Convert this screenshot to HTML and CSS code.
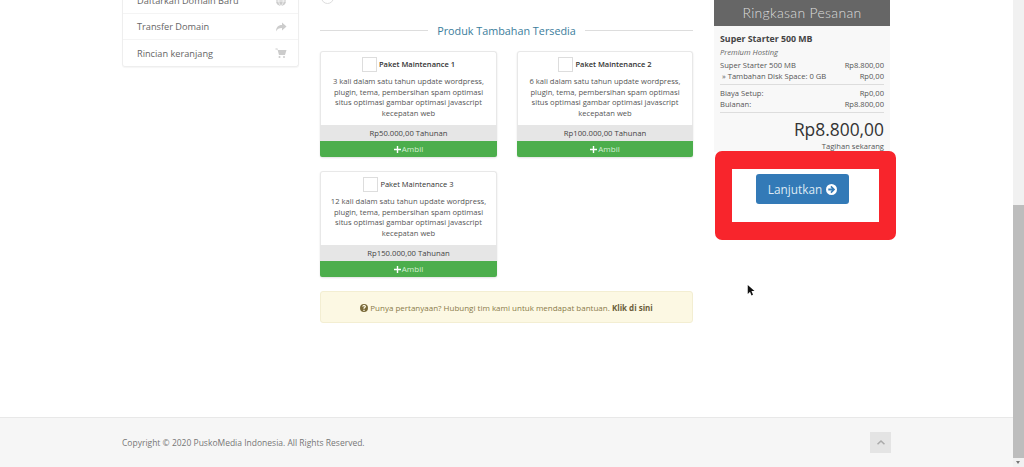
FILE: index.html
```html
<!DOCTYPE html>
<html lang="en">
<head>
  <meta charset="UTF-8" />
  <title>Keranjang</title>
  <link rel="stylesheet" href="styles.css">
</head>
<body>
  <div class="page">
    <main class="main">
      <aside class="sidebar">
        <a class="side-item">Daftarkan Domain Baru
          <svg class="side-icon" viewBox="0 0 24 24"><circle cx="12" cy="12" r="10"/><path class="globe-lines" d="M2 12h20M12 2c-6 6-6 14 0 20M12 2c6 6 6 14 0 20"/></svg>
        </a>
        <a class="side-item">Transfer Domain
          <svg class="side-icon" viewBox="0 0 24 24"><path d="M14 3l9 8-9 8v-5C8 14 4 16 2 21 2 13 6 8 14 8z"/></svg>
        </a>
        <a class="side-item">Rincian keranjang
          <svg class="side-icon" viewBox="0 0 24 24"><path d="M1 3h4l1 3h17l-3 10H8L5 5H1z"/><circle cx="9" cy="20" r="2"/><circle cx="18" cy="20" r="2"/></svg>
        </a>
      </aside>

      <section class="content">
        <div class="radio"></div>
        <h2 class="addons-title"><span>Produk Tambahan Tersedia</span></h2>
        <div class="addons">
          <div class="addon">
            <div class="addon-head"><span class="check"></span><b>Paket Maintenance 1</b></div>
            <p class="addon-desc">3 kali dalam satu tahun update wordpress, plugin, tema, pembersihan spam optimasi situs optimasi gambar optimasi javascript kecepatan web</p>
            <div class="addon-price">Rp50.000,00 Tahunan</div>
            <div class="addon-btn"><svg class="plus" viewBox="0 0 10 10"><path d="M4 0h2v4h4v2H6v4H4V6H0V4h4z"/></svg>Ambil</div>
          </div>
          <div class="addon">
            <div class="addon-head"><span class="check"></span><b>Paket Maintenance 2</b></div>
            <p class="addon-desc">6 kali dalam satu tahun update wordpress, plugin, tema, pembersihan spam optimasi situs optimasi gambar optimasi javascript kecepatan web</p>
            <div class="addon-price">Rp100.000,00 Tahunan</div>
            <div class="addon-btn"><svg class="plus" viewBox="0 0 10 10"><path d="M4 0h2v4h4v2H6v4H4V6H0V4h4z"/></svg>Ambil</div>
          </div>
          <div class="addon">
            <div class="addon-head"><span class="check"></span><b class="plain">Paket Maintenance 3</b></div>
            <p class="addon-desc">12 kali dalam satu tahun update wordpress, plugin, tema, pembersihan spam optimasi situs optimasi gambar optimasi javascript kecepatan web</p>
            <div class="addon-price">Rp150.000,00 Tahunan</div>
            <div class="addon-btn"><svg class="plus" viewBox="0 0 10 10"><path d="M4 0h2v4h4v2H6v4H4V6H0V4h4z"/></svg>Ambil</div>
          </div>
        </div>
        <div class="help">
          <svg class="help-icon" viewBox="0 0 24 24"><path fill-rule="evenodd" d="M12 0a12 12 0 1 1 0 24 12 12 0 0 1 0-24zM10 17v4h4v-4zM12 3c-3 0-5 2-5.500 4.500l3.500 1c.3-1.500 1-2.300 2-2.300s1.800.6 1.800 1.500c0 2-3.800 2.300-3.800 6.300v.5h4c0-3 4-3.500 4-7 0-2.700-2.700-4.500-6-4.500z"/></svg>
          Punya pertanyaan? Hubungi tim kami untuk mendapat bantuan. <b>Klik di sini</b>
        </div>
      </section>

      <aside class="summary">
        <div class="summary-head">Ringkasan Pesanan</div>
        <div class="summary-body">
          <div class="prod-name">Super Starter 500 MB</div>
          <div class="prod-group">Premium Hosting</div>
          <div class="lines">
            <div class="line"><span>Super Starter 500 MB</span><span>Rp8.800,00</span></div>
            <div class="line"><span>&nbsp;» Tambahan Disk Space: 0 GB</span><span>Rp0,00</span></div>
          </div>
          <div class="lines">
            <div class="line"><span>Biaya Setup:</span><span>Rp0,00</span></div>
            <div class="line"><span>Bulanan:</span><span>Rp8.800,00</span></div>
          </div>
          <div class="total">Rp8.800,00</div>
          <div class="total-note">Tagihan sekarang</div>
        </div>
        <div class="highlight">
          <a class="btn-next">Lanjutkan
            <svg class="next-icon" viewBox="0 0 24 24"><path fill-rule="evenodd" d="M12 0a12 12 0 1 1 0 24 12 12 0 0 1 0-24zM12 4l-2.500 2.500 3.500 3.500H5v4h8l-3.500 3.500L12 20l8-8z"/></svg>
          </a>
        </div>
      </aside>

      <svg class="cursor" viewBox="0 0 12 16"><path d="M1 0v12l3-3 2 5 2-1-2-5h4z"/></svg>
    </main>

    <footer class="footer">
      <span>Copyright © 2020 PuskoMedia Indonesia. All Rights Reserved.</span>
      <a class="to-top"><svg viewBox="0 0 10 6"><path d="M5 0l5 4.500-1.300 1.300L5 2.500 1.300 5.800 0 4.500z"/></svg></a>
    </footer>
  </div>

  <div class="scrollbar"><div class="scroll-thumb"></div><div class="scroll-arrow"></div></div>
</body>
</html>
```

FILE: styles.css
```css
* {
  box-sizing: border-box;
}

html, body {
  height: 467px;
  overflow: hidden;
}

body {
  margin: 0;
  display: flex;
  font-family: "Open Sans", sans-serif;
  color: #333;
  background: #fff;
}

.page {
  flex: 1;
  display: flex;
  flex-direction: column;
}

.main {
  position: relative;
  height: 417px;
  padding-left: 122px;
  display: flex;
  align-items: flex-start;
}

/* sidebar, scrolled past its top */
.sidebar {
  width: 177px;
  margin-top: -12px;
  border: 1px solid #eee;
  border-top: none;
  border-radius: 0 0 3px 3px;
  box-shadow: 0 1px 1px rgba(0, 0, 0, 0.04);
}

.side-item {
  height: 26px;
  padding: 0 11px 0 14px;
  display: flex;
  align-items: center;
  justify-content: space-between;
  font-size: 9.2px;
  color: #666;
  border-bottom: 1px solid #f4f4f4;
}

.side-item:last-child {
  border-bottom: none;
}

.side-icon {
  width: 12px;
  height: 12px;
  fill: #ccc;
}

.globe-lines {
  fill: none;
  stroke: #fff;
  stroke-width: 1.500;
}

.content {
  width: 373px;
  margin-left: 21px;
  position: relative;
}

.radio {
  position: absolute;
  left: 1px;
  top: -9px;
  width: 13px;
  height: 13px;
  border: 1px solid #ddd;
  border-radius: 50%;
}

.addons-title {
  margin: 23px 0 13px;
  display: flex;
  align-items: center;
  gap: 9px;
  font-size: 10.8px;
  line-height: 15px;
  font-weight: 400;
  color: #3b7d9c;
  white-space: nowrap;
}

.addons-title::before,
.addons-title::after {
  content: "";
  flex: 1;
  height: 1px;
  background: #ddd;
}

.addons {
  display: grid;
  grid-template-columns: 177px 176px;
  justify-content: space-between;
  row-gap: 14px;
}

.addon {
  height: 106px;
  display: flex;
  flex-direction: column;
  border: 1px solid #e8e8e8;
  border-bottom: none;
  border-radius: 3px;
  box-shadow: 0 1px 2px rgba(0, 0, 0, 0.12);
  text-align: center;
}

.addon-head {
  height: 24px;
  display: flex;
  justify-content: center;
  align-items: center;
  gap: 2px;
  font-size: 7.5px;
}

.addon-head b {
  font-weight: 600;
}

.addon-head b.plain {
  font-weight: 400;
}

.check {
  width: 15px;
  height: 15px;
  border: 1px solid #ddd;
  background: #fff;
}

.addon-desc {
  flex: 1;
  margin: 0;
  padding: 0 8px;
  font-size: 7.6px;
  line-height: 10.5px;
  color: #555;
}

.addon-price {
  height: 16px;
  margin: 0 -1px;
  font-size: 7.7px;
  line-height: 16px;
  color: #444;
  background: #e6e6e6;
}

.addon-btn {
  height: 16px;
  margin: 0 -1px;
  font-size: 8px;
  line-height: 16px;
  color: #d6eed6;
  background: #4cae4c;
  border-radius: 0 0 2px 2px;
}

.plus {
  width: 7px;
  height: 7px;
  margin-right: 1px;
  fill: #fff;
  vertical-align: -0.5px;
}

.help {
  margin-top: 14px;
  height: 32px;
  font-size: 8px;
  line-height: 32px;
  text-align: center;
  color: #8a7b4a;
  background: #fcf8e3;
  border: 1px solid #f3eed2;
  border-radius: 3px;
}

.help b {
  color: #6b5e3a;
  font-weight: 700;
}

.help-icon {
  width: 8px;
  height: 8px;
  fill: #7a6a3a;
  vertical-align: -1px;
}

/* order summary */
.summary {
  position: relative;
  width: 176px;
  margin-left: 21px;
}

.summary-head {
  height: 26px;
  font-family: Lato, sans-serif;
  font-size: 14px;
  font-weight: 300;
  line-height: 26px;
  letter-spacing: 0.3px;
  text-align: center;
  color: #ddd;
  background: #666;
}

.summary-body {
  height: 126px;
  padding: 7px 6px 0 6px;
  font-size: 7.6px;
  color: #555;
  background: #f8f8f8;
}

.prod-name {
  font-size: 8.8px;
  line-height: 13px;
  font-weight: 700;
  color: #444;
}

.prod-group {
  font-style: italic;
  line-height: 12px;
  color: #666;
}

.lines {
  padding: 2px 0 3px;
  border-bottom: 1px solid #ddd;
  margin-bottom: 1px;
}

.line {
  display: flex;
  justify-content: space-between;
  line-height: 10.500px;
}

.total {
  margin-top: 4px;
  font-size: 17.4px;
  line-height: 24px;
  text-align: right;
  color: #333;
}

.total-note {
  line-height: 11px;
  font-size: 7.6px;
  text-align: right;
  color: #555;
}

/* annotation painted over the screenshot */
.highlight {
  position: absolute;
  left: 1px;
  top: 151px;
  width: 181px;
  height: 89px;
  padding: 5px 6px 0 0;
  display: flex;
  justify-content: center;
  align-items: flex-start;
  background: #fff;
  border: solid #f8252c;
  border-width: 18px 17px;
  border-radius: 7px;
}

.btn-next {
  width: 93px;
  height: 30px;
  display: flex;
  justify-content: center;
  align-items: center;
  gap: 4px;
  font-size: 11.800px;
  color: #dfeaf4;
  background: #337ab7;
  border-radius: 3px;
}

.next-icon {
  width: 11px;
  height: 11px;
  fill: #fff;
}

.cursor {
  position: absolute;
  left: 747px;
  top: 284px;
  width: 9px;
  height: 14px;
  fill: #111;
}

.footer {
  height: 50px;
  padding: 0 122px;
  display: flex;
  align-items: center;
  justify-content: space-between;
  font-size: 8.5px;
  color: #777;
  background: #f6f6f6;
  border-top: 1px solid #e8e8e8;
}

.to-top {
  width: 21px;
  height: 21px;
  display: flex;
  align-items: center;
  justify-content: center;
  background: #e4e4e4;
}

.to-top svg {
  width: 8px;
  height: 5px;
  fill: #aaa;
}

.scrollbar {
  position: relative;
  width: 11px;
  background: #f1f1f1;
}

.scroll-thumb {
  position: absolute;
  top: 205px;
  left: 0;
  width: 11px;
  height: 253px;
  background: #bdbdbd;
}

.scroll-arrow {
  position: absolute;
  bottom: 3px;
  left: 3px;
  border: solid transparent;
  border-width: 3px 2.500px 0;
  border-top-color: #777;
}
```
